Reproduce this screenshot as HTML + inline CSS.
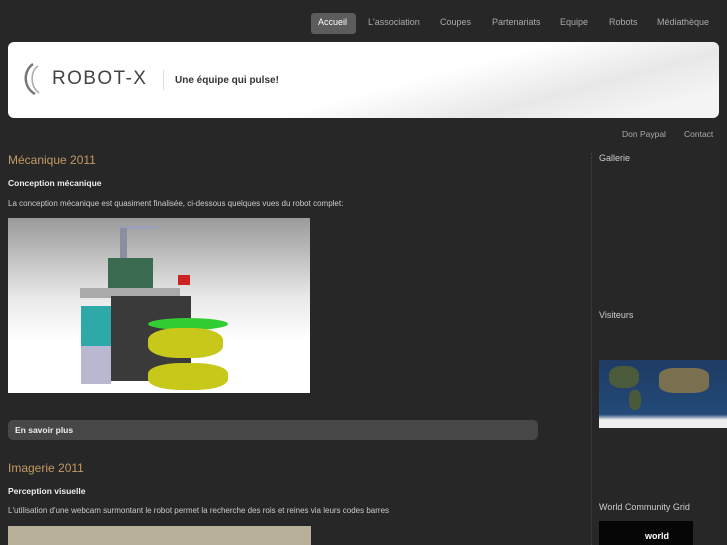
<!DOCTYPE html>
<html><head><meta charset="utf-8"><style>
body{margin:0;width:727px;height:545px;overflow:hidden;background:#272727;font-family:"Liberation Sans",sans-serif;position:relative}
.a{position:absolute}
.nav{font-size:9px;color:#aaa;top:17px}
.h2{color:#c49a63;font-size:12px}
.b{color:#eee;font-size:8.5px;font-weight:bold}
.p{color:#ccc;font-size:8px}
.side{color:#ccc;font-size:9px}
</style></head><body>
<div class="a" style="left:311px;top:13px;width:45px;height:21px;background:#5c5c5c;border-radius:3px"></div>
<div class="a nav" style="left:318px;color:#fff">Accueil</div>
<div class="a nav" style="left:368px">L'association</div>
<div class="a nav" style="left:440px">Coupes</div>
<div class="a nav" style="left:492px">Partenariats</div>
<div class="a nav" style="left:560px">Equipe</div>
<div class="a nav" style="left:609px">Robots</div>
<div class="a nav" style="left:657px">Médiathèque</div>
<div class="a" style="left:8px;top:42px;width:711px;height:76px;background:linear-gradient(165deg,#fff 55%,#e8e8e8 75%,#f4f4f4 90%);border-radius:6px;overflow:hidden">
<svg class="a" style="left:13px;top:20px" width="24" height="34" viewBox="0 0 24 34"><path d="M12 2 C2 9 2 25 14 32" stroke="#777" stroke-width="2.5" fill="none"/><path d="M17 4 C9 10 9 24 18 31" stroke="#aaa" stroke-width="1.5" fill="none"/></svg>
<div class="a" style="left:44px;top:26px;font-size:19px;color:#444;letter-spacing:1.4px">ROBOT-X</div>
<div class="a" style="left:155px;top:28px;width:1px;height:20px;background:#ddd"></div>
<div class="a" style="left:167px;top:33px;font-size:10px;font-weight:bold;color:#333">Une équipe qui pulse!</div>
</div>
<div class="a" style="left:622px;top:129px;font-size:8.5px;color:#aaa">Don Paypal</div>
<div class="a" style="left:684px;top:129px;font-size:8.5px;color:#aaa">Contact</div>
<div class="a h2" style="left:8px;top:153px">Mécanique 2011</div>
<div class="a b" style="left:8px;top:178px">Conception mécanique</div>
<div class="a p" style="left:8px;top:199px">La conception mécanique est quasiment finalisée, ci-dessous quelques vues du robot complet:</div>
<div class="a" style="left:8px;top:218px;width:302px;height:175px;background:linear-gradient(#9a9a9a,#e8e8e8 45%,#fff 70%);overflow:hidden">
<div class="a" style="left:110px;top:8px;width:40px;height:3px;background:#9aa0b8"></div>
<div class="a" style="left:112px;top:10px;width:7px;height:42px;background:#8a8ea0"></div>
<div class="a" style="left:100px;top:40px;width:45px;height:32px;background:#3a6a50"></div>
<div class="a" style="left:72px;top:70px;width:100px;height:10px;background:#aaa"></div>
<div class="a" style="left:73px;top:88px;width:30px;height:40px;background:#2fa8a8"></div>
<div class="a" style="left:73px;top:128px;width:30px;height:38px;background:#b8b8d0"></div>
<div class="a" style="left:103px;top:78px;width:80px;height:85px;background:#3a3a3a"></div>
<div class="a" style="left:140px;top:100px;width:80px;height:12px;background:#3c3;border-radius:50%"></div>
<div class="a" style="left:140px;top:110px;width:75px;height:30px;background:#c8c81a;border-radius:40%"></div>
<div class="a" style="left:140px;top:145px;width:80px;height:27px;background:#c8c81a;border-radius:40%"></div>
<div class="a" style="left:170px;top:57px;width:12px;height:10px;background:#c22"></div>
</div>
<div class="a" style="left:8px;top:420px;width:530px;height:20px;background:#474747;border-radius:5px"></div>
<div class="a b" style="left:15px;top:425px;color:#eee">En savoir plus</div>
<div class="a h2" style="left:8px;top:461px">Imagerie 2011</div>
<div class="a b" style="left:8px;top:486px">Perception visuelle</div>
<div class="a p" style="left:8px;top:506px">L'utilisation d'une webcam surmontant le robot permet la recherche des rois et reines via leurs codes barres</div>
<div class="a" style="left:8px;top:526px;width:303px;height:19px;background:#b9b09a"></div>
<div class="a" style="left:591px;top:153px;width:0;height:392px;border-left:1px dotted #444"></div>
<div class="a side" style="left:599px;top:153px">Gallerie</div>
<div class="a side" style="left:599px;top:310px">Visiteurs</div>
<div class="a" style="left:599px;top:360px;width:128px;height:68px;background:linear-gradient(#1e3b63,#234a78 80%,#eee 88%)">
<div class="a" style="left:10px;top:6px;width:30px;height:22px;background:#4a5a3a;border-radius:40%"></div>
<div class="a" style="left:30px;top:30px;width:12px;height:20px;background:#4a5a3a;border-radius:40%"></div>
<div class="a" style="left:60px;top:8px;width:50px;height:25px;background:#7a7050;border-radius:30%"></div>
</div>
<div class="a side" style="left:599px;top:502px">World Community Grid</div>
<div class="a" style="left:599px;top:521px;width:94px;height:24px;background:#050505"><span class="a" style="left:46px;top:10px;color:#fff;font-size:9px;font-weight:bold">world</span></div>
</body></html>
